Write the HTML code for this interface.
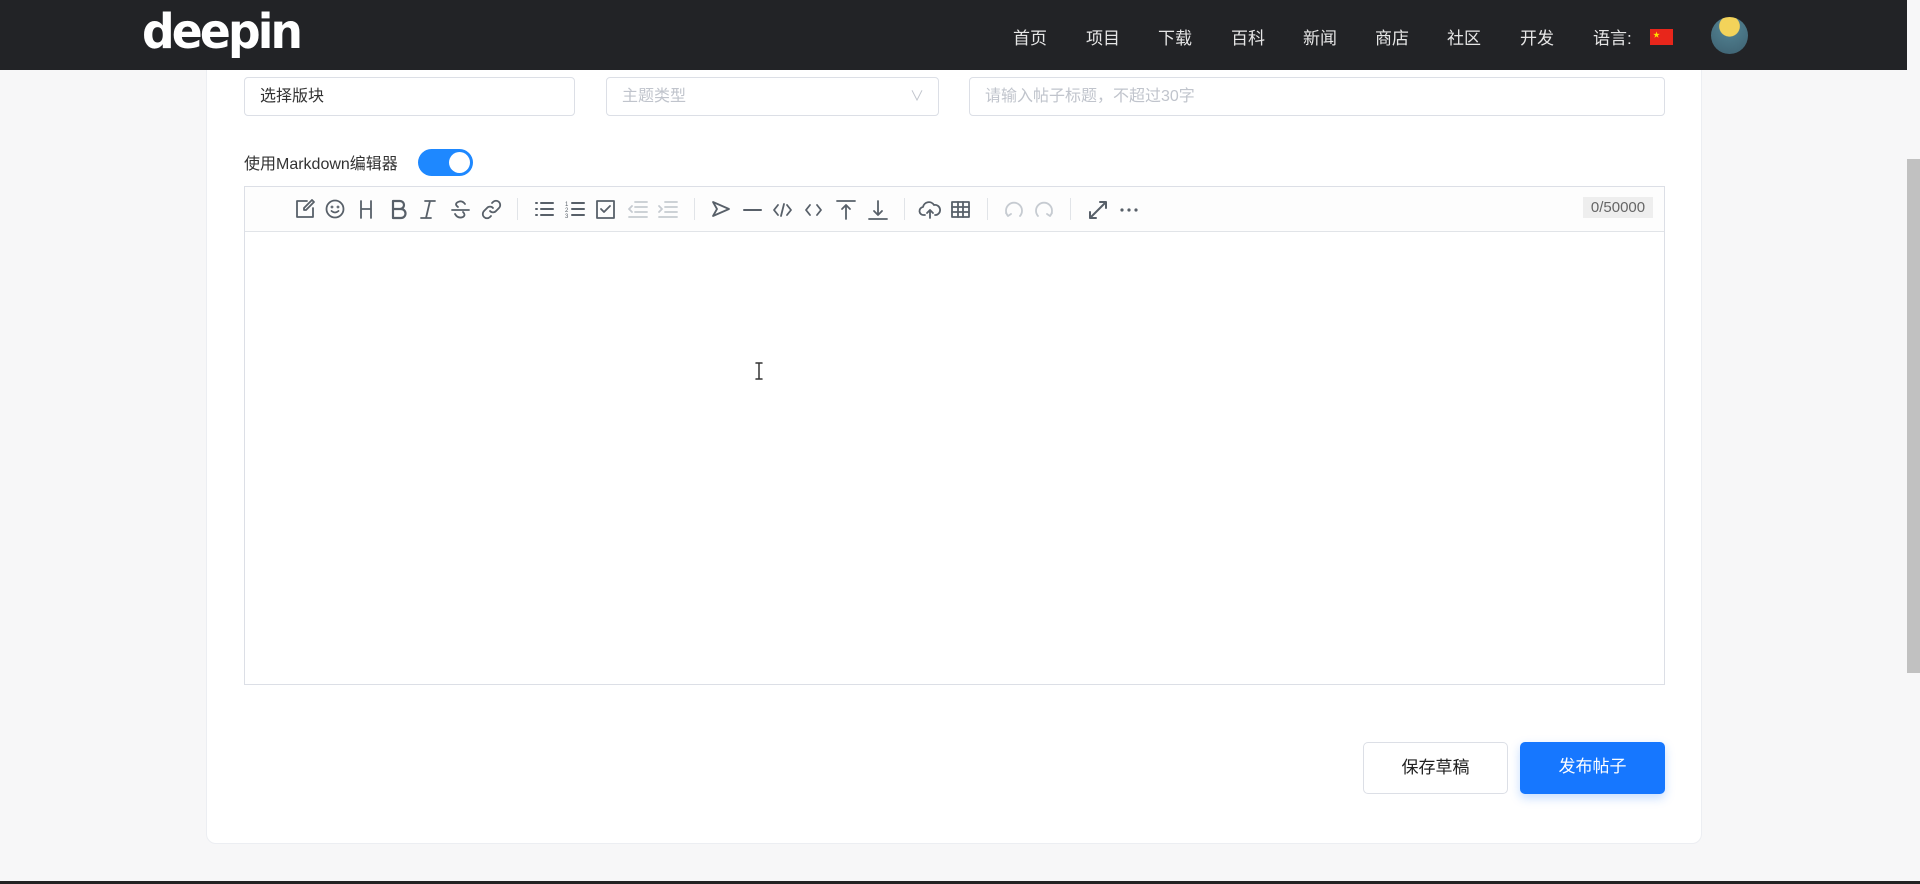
<!DOCTYPE html>
<html><head><meta charset="utf-8">
<style>
*{margin:0;padding:0;box-sizing:border-box}
body{width:1920px;height:884px;overflow:hidden;background:#f7f7f8;font-family:"Liberation Sans","Noto Sans CJK SC",sans-serif;position:relative}
.hdr{position:absolute;left:0;top:0;width:1907px;height:70px;background:#222326;z-index:5}
.logo{position:absolute;left:142px;top:4px;color:#fff;font:bold 48px "DejaVu Sans",sans-serif;letter-spacing:-3px;z-index:6;transform:scaleX(0.95);transform-origin:left}
.nav{position:absolute;top:24px;color:#e6e6e6;font-size:17px;z-index:6}
.flag{position:absolute;left:1650px;top:29px;width:23px;height:16px;background:#e8261b;z-index:6}
.av{position:absolute;left:1711px;top:17px;width:37px;height:37px;border-radius:50%;background:radial-gradient(circle at 50% 25%,#f3d35a 0 30%,#4d7a8a 32%,#3d6070 100%);z-index:6}
.sb{position:absolute;left:1907px;top:159px;width:13px;height:514px;background:#c1c1c1}
.card{position:absolute;left:206px;top:40px;width:1496px;height:804px;background:#fff;border-radius:10px;border:1px solid #eceef2}
.inp{position:absolute;top:77px;height:39px;border:1px solid #dcdfe6;border-radius:4px;background:#fff;font-size:16px;line-height:37px;padding-left:15px}
.lbl{position:absolute;left:244px;top:150px;font-size:16px;color:#333}
.tg{position:absolute;left:418px;top:149px;width:55px;height:27px;border-radius:14px;background:#1e88ff}
.tg::after{content:"";position:absolute;right:3px;top:3px;width:21px;height:21px;border-radius:50%;background:#fff}
.ed{position:absolute;left:244px;top:186px;width:1421px;height:499px;border:1px solid #dcdfe6;background:#fff}
.tb{height:45px;border-bottom:1px solid #e1e4e8;background:#fdfdfd}
.sep{position:absolute;top:198px;width:1px;height:22px;background:#e1e4e8}
.cnt{position:absolute;left:1583px;top:197px;width:70px;height:21px;background:#eeeeee;color:#666;font-size:15px;line-height:21px;text-align:center}
.btn{position:absolute;top:742px;width:145px;height:52px;border-radius:5px;font-size:17px;line-height:50px;text-align:center}
</style></head><body>
<div class="card"></div>
<div class="hdr"></div>
<div class="logo">deepin</div>
<div class="nav" style="left:1013px">首页</div>
<div class="nav" style="left:1086px">项目</div>
<div class="nav" style="left:1158px">下载</div>
<div class="nav" style="left:1231px">百科</div>
<div class="nav" style="left:1303px">新闻</div>
<div class="nav" style="left:1375px">商店</div>
<div class="nav" style="left:1447px">社区</div>
<div class="nav" style="left:1520px">开发</div>
<div class="nav" style="left:1593px">语言:</div>
<div class="flag"><span style="position:absolute;left:3px;top:1px;color:#ffde00;font-size:7px">★</span></div>
<div class="av"></div>
<div class="sb"></div>
<div class="inp" style="left:244px;width:331px;color:#333">选择版块</div>
<div class="inp" style="left:606px;width:333px;color:#c0c4cc">主题类型<span style="position:absolute;right:14px;top:0;color:#c0c4cc;font-size:14px">∨</span></div>
<div class="inp" style="left:969px;width:696px;color:#c0c4cc">请输入帖子标题，不超过30字</div>
<div class="lbl">使用Markdown编辑器</div>
<div class="tg"></div>
<div class="ed"><div class="tb"></div></div>
<svg width="1920" height="884" style="position:absolute;left:0;top:0" fill="none" stroke="#586069" stroke-width="1.8" stroke-linecap="round" stroke-linejoin="round">
<g transform="translate(295,199)"><path d="M12 2H2v16h16V9"/><path d="M17 1l2 2-8 8H9V9z"/></g>
<g transform="translate(325,199)"><circle cx="10" cy="10" r="8.5"/><path d="M6.5 12q3.5 3 7 0"/><circle cx="7" cy="8" r=".5"/><circle cx="13" cy="8" r=".5"/></g>
<g transform="translate(356,199)"><path d="M5 2v17M15 2v17M5 10h10"/></g>
<g transform="translate(388,199)"><path d="M5 2h7a4 4 0 010 8H5zM5 10h8a4.5 4.5 0 010 9H5z" stroke-width="2.2"/></g>
<g transform="translate(418,199)"><path d="M7 2h10M3 19h10M12 2L8 19"/></g>
<g transform="translate(450,199)"><path d="M2 11h17M15 5q-3-4-7-2-4 2 0 5M5 15q3 5 8 3 3-2 0-5"/></g>
<g transform="translate(481,199)"><path d="M9 12a4 4 0 006 0l3-3a4 4 0 00-6-6l-1 1M12 9a4 4 0 00-6 0l-3 3a4 4 0 006 6l1-1"/></g>
<g transform="translate(534,199)"><path d="M7 4h12M7 10h12M7 16h12M2 4h1M2 10h1M2 16h1" stroke-width="2"/></g>
<g transform="translate(564,199)"><path d="M8 4h12M8 10h12M8 16h12" stroke-width="2"/><text x="1" y="7" font-size="6" fill="#586069" stroke="none">1</text><text x="1" y="13" font-size="6" fill="#586069" stroke="none">2</text><text x="1" y="19" font-size="6" fill="#586069" stroke="none">3</text></g>
<g transform="translate(595,199)"><rect x="2" y="2" width="17" height="17"/><path d="M6 10l3 3 6-6"/></g>
<g transform="translate(627,199)" stroke="#c6cbd1"><path d="M8 3h12M8 8h12M8 13h12M2 18h18M5 7l-3 3 3 3"/></g>
<g transform="translate(657,199)" stroke="#c6cbd1"><path d="M8 3h12M8 8h12M8 13h12M2 18h18M2 7l3 3-3 3"/></g>
<g transform="translate(710,199)"><path d="M3 3l16 7-16 7 4-7z"/></g>
<g transform="translate(742,199)"><path d="M2 11h17" stroke-width="2"/></g>
<g transform="translate(772,199)"><path d="M6 6l-4 5 4 5M15 6l4 5-4 5M12 5l-3 12"/></g>
<g transform="translate(803,199)"><path d="M7 6l-4 5 4 5M14 6l4 5-4 5"/></g>
<g transform="translate(835,199)"><path d="M2 2h18M11 6v14M7 10l4-4 4 4"/></g>
<g transform="translate(867,199)"><path d="M2 20h18M11 2v14M7 12l4 4 4-4"/></g>
<g transform="translate(919,199)"><path d="M6 16H5a4 4 0 01-1-8 6 6 0 0111-2 5 5 0 012 10h-1M11 19v-8M8 14l3-3 3 3"/></g>
<g transform="translate(950,199)"><rect x="2" y="3" width="17" height="15"/><path d="M2 8h17M2 13h17M8 3v15M13 3v15"/></g>
<g transform="translate(1003,199)" stroke="#c6cbd1"><path d="M5 17a8 8 0 1112 0M3 14l2 3 3-2"/></g>
<g transform="translate(1033,199)" stroke="#c6cbd1"><path d="M5 17a8 8 0 1112 0M19 14l-2 3-3-2"/></g>
<g transform="translate(1087,199)"><path d="M3 19L19 3M13 3h6v6M3 13v6h6" stroke-width="2"/></g>
<g transform="translate(1118,199)" fill="#586069" stroke="none"><circle cx="4" cy="11" r="1.6"/><circle cx="11" cy="11" r="1.6"/><circle cx="18" cy="11" r="1.6"/></g>
<path d="M756 363h6M756 379h6M759 363v16" stroke="#333" stroke-width="1.5"/>
</svg>
<div class="sep" style="left:517px"></div>
<div class="sep" style="left:694px"></div>
<div class="sep" style="left:904px"></div>
<div class="sep" style="left:987px"></div>
<div class="sep" style="left:1070px"></div>
<div class="cnt">0/50000</div>
<div class="btn" style="left:1363px;border:1px solid #dcdfe6;background:#fff;color:#222">保存草稿</div>
<div class="btn" style="left:1520px;background:#1677ff;color:#fff;box-shadow:0 4px 10px rgba(22,119,255,.25)">发布帖子</div>
<div style="position:absolute;left:0;top:881px;width:1920px;height:3px;background:#222"></div>
</body></html>
